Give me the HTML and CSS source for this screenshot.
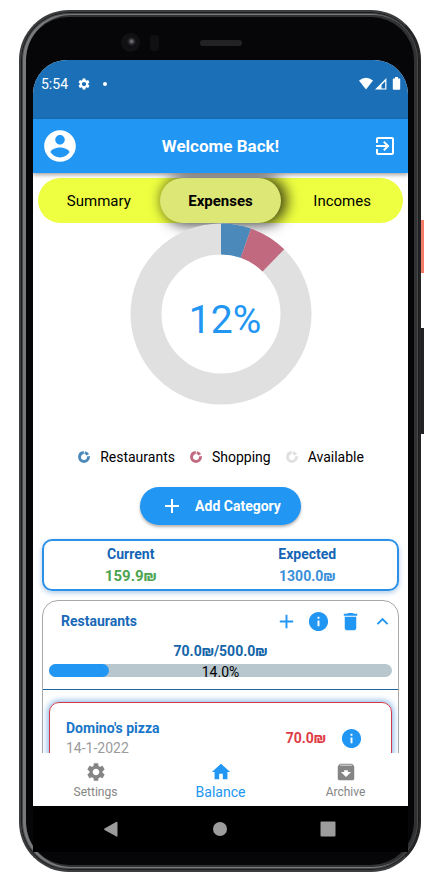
FILE: index.html
```html
<!DOCTYPE html>
<html lang="en">
<head>
<meta charset="utf-8">
<meta name="viewport" content="width=device-width, initial-scale=1">
<title>Balance</title>
<link rel="stylesheet" href="styles.css">
</head>
<body>
<svg class="defs" aria-hidden="true">
  <symbol id="gear" viewBox="0 0 24 24"><path d="M19.14 12.94c.04-.3.06-.61.06-.94 0-.32-.02-.64-.07-.94l2.03-1.58c.18-.14.23-.41.12-.61l-1.92-3.32c-.12-.22-.37-.29-.59-.22l-2.39.96c-.5-.38-1.03-.7-1.62-.94l-.36-2.54c-.04-.24-.24-.41-.48-.41h-3.84c-.24 0-.43.17-.47.41l-.36 2.54c-.59.24-1.13.57-1.62.94l-2.39-.96c-.22-.08-.47 0-.59.22L2.74 8.87c-.12.21-.08.47.12.61l2.03 1.58c-.05.3-.09.63-.09.94s.02.64.07.94l-2.03 1.58c-.18.14-.23.41-.12.61l1.92 3.32c.12.22.37.29.59.22l2.39-.96c.5.38 1.03.7 1.62.94l.36 2.54c.05.24.24.41.48.41h3.84c.24 0 .44-.17.47-.41l.36-2.54c.59-.24 1.13-.56 1.62-.94l2.39.96c.22.08.47 0 .59-.22l1.92-3.32c.12-.22.07-.47-.12-.61l-2.01-1.58zM12 15.6c-1.98 0-3.6-1.62-3.6-3.6s1.62-3.6 3.6-3.6 3.6 1.62 3.6 3.6-1.62 3.6-3.6 3.6z"/></symbol>
  <symbol id="plus" viewBox="0 0 24 24"><path d="M19 13h-6v6h-2v-6H5v-2h6V5h2v6h6v2z"/></symbol>
  <symbol id="info" viewBox="0 0 24 24"><path d="M12 2C6.48 2 2 6.48 2 12s4.48 10 10 10 10-4.48 10-10S17.52 2 12 2zm1 15h-2v-6h2v6zm0-8h-2V7h2v2z"/></symbol>
  <symbol id="usage" viewBox="0 0 24 24"><circle cx="12" cy="12" r="7.700" fill="none" stroke="currentColor" stroke-width="5" pathLength="360" stroke-dasharray="48 20 272 20" transform="rotate(-80 12 12)"/></symbol>
</svg>
<div class="phone">
  <div class="bezel" aria-hidden="true"><span class="camera"></span><span class="sensor"></span><span class="speaker"></span></div>
  <span class="side-key power" aria-hidden="true"></span>
  <span class="side-key volume" aria-hidden="true"></span>
  <div class="screen">
    <div class="status">
      <span class="clock">5:54</span>
      <svg class="icon-status"><use href="#gear"/></svg>
      <span class="dot"></span>
      <svg class="signals" viewBox="0 0 42 14" aria-hidden="true">
        <path d="M0 3.6Q7-2 14 3.6L7 12.4z"/>
        <path fill-rule="evenodd" d="M16 12.6L27.4 1v11.6zM22.5 11.4h3.7V4.2l-3.7 3.8z"/>
        <path d="M36 1.4V0h3v1.4h1.4q.8 0 .8.8v9.8q0 .8-.8.8h-5.8q-.8 0-.8-.8V2.2q0-.8.8-.8z"/>
      </svg>
    </div>
    <header class="appbar">
      <button class="bar-button" aria-label="Account"><svg class="icon-account" viewBox="0 0 24 24"><path d="M12 2C6.48 2 2 6.48 2 12s4.48 10 10 10 10-4.48 10-10S17.52 2 12 2zm0 3c1.66 0 3 1.34 3 3s-1.34 3-3 3-3-1.34-3-3 1.34-3 3-3zm0 14.2c-2.5 0-4.71-1.28-6-3.22.03-1.99 4-3.08 6-3.08 1.99 0 5.97 1.09 6 3.08-1.29 1.94-3.5 3.22-6 3.22z"/></svg></button>
      <h1>Welcome Back!</h1>
      <button class="bar-button" aria-label="Log out"><svg class="icon" viewBox="0 0 24 24"><path d="M10.09 15.59L11.5 17l5-5-5-5-1.41 1.41L12.67 11H3v2h9.67l-2.58 2.59zM19 3H5c-1.11 0-2 .9-2 2v4h2V5h14v14H5v-4H3v4c0 1.1.89 2 2 2h14c1.1 0 2-.9 2-2V5c0-1.100-.9-2-2-2z"/></svg></button>
    </header>
    <main class="content">
      <nav class="tabs">
        <button>Summary</button>
        <button class="selected">Expenses</button>
        <button>Incomes</button>
      </nav>
      <svg class="donut" viewBox="0 0 182 182" role="img" aria-label="12% used">
        <circle class="ring available" cx="91" cy="91" r="75" pathLength="1300"/>
        <g transform="rotate(-90 91 91)">
          <circle class="ring restaurants" cx="91" cy="91" r="75" pathLength="1300" stroke-dasharray="70 1230"/>
          <circle class="ring shopping" cx="91" cy="91" r="75" pathLength="1300" stroke-dasharray="90 1210" stroke-dashoffset="-70"/>
        </g>
        <text x="95" y="110" text-anchor="middle">12%</text>
      </svg>
      <ul class="legend">
        <li><svg class="restaurants"><use href="#usage"/></svg>Restaurants</li>
        <li><svg class="shopping"><use href="#usage"/></svg>Shopping</li>
        <li><svg class="available"><use href="#usage"/></svg>Available</li>
      </ul>
      <button class="add"><svg class="icon"><use href="#plus"/></svg>Add Category</button>
      <dl class="totals">
        <div><dt>Current</dt><dd class="current">159.9₪</dd></div>
        <div><dt>Expected</dt><dd>1300.0₪</dd></div>
      </dl>
      <section class="category">
        <div class="category-head">
          <h2>Restaurants</h2>
          <button aria-label="Add expense"><svg class="icon"><use href="#plus"/></svg></button>
          <button aria-label="Category details"><svg class="icon"><use href="#info"/></svg></button>
          <button aria-label="Delete category"><svg class="icon" viewBox="0 0 24 24"><path d="M6 19c0 1.100.9 2 2 2h8c1.100 0 2-.9 2-2V7H6v12zM19 4h-3.500l-1-1h-5l-1 1H5v2h14V4z"/></svg></button>
          <button aria-label="Collapse"><svg class="icon" viewBox="0 0 24 24"><path d="M12 8l-6 6 1.410 1.410L12 10.830l4.590 4.580L18 14z"/></svg></button>
        </div>
        <p class="spent">70.0₪/500.0₪</p>
        <div class="meter"><span class="fill"></span><span class="meter-text">14.0%</span></div>
        <div class="expenses">
          <article class="expense">
            <div class="expense-text"><h3>Domino's pizza</h3><time datetime="2022-01-14">14-1-2022</time></div>
            <span class="amount">70.0₪</span>
            <button aria-label="Expense details"><svg class="icon"><use href="#info"/></svg></button>
          </article>
        </div>
      </section>
    </main>
    <nav class="bottom">
      <a href="#settings"><svg class="icon"><use href="#gear"/></svg>Settings</a>
      <a href="#balance" class="active"><svg class="icon" viewBox="0 0 24 24"><path d="M10 20v-6h4v6h5v-8h3L12 3 2 12h3v8z"/></svg>Balance</a>
      <a href="#archive"><svg class="icon" viewBox="0 0 24 24"><path d="M20.540 5.230l-1.390-1.680C18.880 3.210 18.470 3 18 3H6c-.47 0-.88.21-1.160.55L3.460 5.230C3.170 5.570 3 6.020 3 6.500V19c0 1.100.9 2 2 2h14c1.100 0 2-.9 2-2V6.500c0-.48-.17-.93-.46-1.270zM12 17.500L6.500 12H10v-2h4v2h3.500L12 17.500zM5.120 5l.81-1h12l.94 1H5.120z"/></svg>Archive</a>
    </nav>
    <div class="system">
      <button aria-label="Back"><svg viewBox="0 0 16 16"><path d="M13.500.8q1 0 1 1v13q0 1-1 .8L1.500 8.900q-.9-.7 0-1.400z"/></svg></button>
      <button aria-label="Home"><svg viewBox="0 0 16 16"><circle cx="8" cy="8" r="7"/></svg></button>
      <button aria-label="Recent apps"><svg viewBox="0 0 16 16"><rect x=".5" y=".5" width="15" height="15" rx="1"/></svg></button>
    </div>
  </div>
</div>
</body>
</html>
```

FILE: styles.css
```css
* { box-sizing: border-box; }

body {
  margin: 0;
  background: #fff;
  color: #000;
  font-family: Roboto, "Open Sans", sans-serif;
  font-size: 14px;
}

h1, h2, h3, p, ul, dl, dd { margin: 0; padding: 0; }
ul { list-style: none; }
button { margin: 0; padding: 0; border: 0; background: none; color: inherit; font: inherit; }
a { color: inherit; text-decoration: none; }
svg { display: block; fill: currentColor; }
.defs { position: absolute; width: 0; height: 0; }
.icon { width: 24px; height: 24px; }

.phone {
  position: relative;
  display: flex;
  flex-direction: column;
  height: calc(100vh - 20px);
  min-height: 640px;
  margin: 10px 7px 10px 19px;
  padding: 0 11px 18px 12px;
  border: 2px solid #3c3d3e;
  border-right-color: #242425;
  border-radius: 50px;
  background: #060608;
  box-shadow: inset 0 0 0 1px #1c1c1e, inset 0 0 0 2px #48494a, inset 2px 0 0 3px #77797a, inset 0 0 0 5px #303132;
}

.bezel { position: relative; flex: none; height: 48px; }
.camera, .sensor, .speaker { position: absolute; }
.camera {
  top: 21px;
  left: 88px;
  width: 19px;
  height: 19px;
  border: 4px solid #111113;
  border-radius: 50%;
  background: radial-gradient(circle at 60% 40%, #68686d 0 1px, #25252a 3px, #101014 5px);
}
.sensor { top: 23px; left: 117px; width: 9px; height: 16px; border-radius: 3px; background: #101012; }
.speaker { top: 28px; left: 50%; width: 42px; height: 6px; margin-left: -21px; border-radius: 3px; background: #222224; }

.side-key { position: absolute; width: 3px; }
.power { top: 208px; right: -5px; height: 53px; background: #f47c68; }
.volume { top: 316px; right: -5px; height: 106px; background: #222224; }

.screen {
  display: flex;
  flex: 1;
  flex-direction: column;
  min-height: 0;
  overflow: hidden;
  border-radius: 34px 34px 0 0;
  background: #fff;
}

.status {
  display: flex;
  flex: none;
  align-items: center;
  height: 59px;
  padding: 0 7px 12px 8px;
  background: #1a6fb7;
  color: #fff;
}
.clock { font-size: 14px; }
.icon-status { width: 14px; height: 14px; margin: 0 12px 0 9px; }
.dot { width: 4px; height: 4px; border-radius: 50%; background: #fff; }
.signals { width: 42px; height: 14px; margin-left: auto; }

.appbar {
  position: relative;
  z-index: 1;
  display: grid;
  flex: none;
  grid-template-columns: 1fr auto 1fr;
  align-items: center;
  height: 54px;
  padding: 0 8px;
  background: #2196f3;
  box-shadow: 0 2px 4px rgb(0 0 0 / 35%);
  color: #fff;
}
.appbar h1 { font-size: 17px; font-weight: 700; }
.bar-button { display: flex; align-items: center; justify-content: center; width: 38px; height: 38px; }
.bar-button:last-child { justify-self: end; width: 30px; }
.icon-account { flex: none; width: 38px; height: 38px; }

.content {
  display: flex;
  flex: 1;
  flex-direction: column;
  min-height: 0;
  padding: 5px 9px 0;
  overflow: hidden;
}
.content > * { flex: none; }

.tabs {
  display: grid;
  grid-template-columns: repeat(3, 1fr);
  height: 45px;
  margin: 0 -4px;
  border-radius: 23px;
  background: #eeff41;
  font-size: 15px;
}
.tabs button { border-radius: 23px; }
.tabs .selected { background: #dce775; box-shadow: 4px 0 14px 2px rgb(0 0 0 / 75%); font-weight: 700; }

.donut { align-self: center; width: 182px; height: 182px; }
.donut text { fill: #2196f3; font-size: 39px; font-weight: 400; }
.ring { fill: none; stroke: currentColor; stroke-width: 31px; }
.restaurants { color: #4b89ba; }
.shopping { color: #c1697f; }
.available { color: #e0e0e0; }

.legend { display: flex; justify-content: center; gap: 14px; margin-top: 43px; line-height: 18px; }
.legend li { display: flex; align-items: center; gap: 9px; }
.legend svg { width: 14px; height: 14px; }

.add {
  display: flex;
  align-self: center;
  align-items: center;
  gap: 11px;
  height: 38px;
  margin-top: 21px;
  padding: 0 20px;
  border-radius: 19px;
  background: #2196f3;
  box-shadow: 0 2px 3px rgb(0 0 0 / 30%);
  color: #fff;
  font-weight: 700;
}

.totals {
  display: grid;
  grid-template-columns: 1fr 1fr;
  margin-top: 14px;
  padding: 2px 0;
  border: 2px solid #2b90e8;
  border-radius: 10px;
  box-shadow: 0 2px 5px rgb(33 110 190 / 35%);
  color: #1565b5;
  font-weight: 700;
  line-height: 22px;
  text-align: center;
}
.totals div { padding-right: 3px; }
.totals dd { color: #3b8fd9; }
.totals .current { color: #4ca450; font-size: 15px; }

.category { min-height: 200px; margin-top: 9px; border: 1px solid #a8a8a8; border-radius: 16px; }
.category-head { display: flex; align-items: center; height: 40px; padding-left: 18px; color: #2196f3; }
.category-head h2 { flex: 1; color: #1869b8; font-size: 14px; }
.category-head button { display: flex; justify-content: center; width: 32px; }
.category-head .icon { width: 23px; height: 23px; }
.spent { color: #1565a9; font-weight: 700; line-height: 20px; text-align: center; }

.meter {
  position: relative;
  height: 13px;
  margin: 3px 6px 12px;
  border-radius: 7px;
  background: #b7c7cd;
  line-height: 17px;
  text-align: center;
}
.fill { position: absolute; top: 0; bottom: 0; left: 0; width: 60px; border-radius: 7px; background: #2196f3; }
.meter-text { position: relative; }

.expenses { padding: 12px 6px; border-top: 1px solid #1e659e; }
.expense {
  display: flex;
  align-items: center;
  height: 72px;
  padding: 0 28px 0 16px;
  border: 1px solid #d33a48;
  border-radius: 10px;
  box-shadow: 0 0 6px 1px rgb(33 120 210 / 60%);
}
.expense-text { flex: 1; line-height: 20px; }
.expense h3 { color: #1976c8; font-size: 14px; }
.expense time { color: #9b9b9b; }
.amount { margin-right: 14px; color: #e03b45; font-weight: 700; }
.expense button { color: #2196f3; }
.expense .icon { width: 23px; height: 23px; }

.bottom {
  position: relative;
  display: grid;
  flex: none;
  grid-template-columns: repeat(3, 1fr);
  height: 53px;
  background: #fff;
  color: #858585;
  font-size: 12px;
}
.bottom a { display: flex; flex-direction: column; align-items: center; padding-top: 8px; line-height: 18px; }
.bottom .icon { width: 22px; height: 22px; }
.bottom .active { color: #2196f3; font-size: 14px; }

.system {
  display: flex;
  flex: none;
  align-items: center;
  justify-content: space-between;
  height: 46px;
  padding: 0 72px 0 70px;
  background: #000;
  color: #9c9c9c;
}
.system svg { width: 16px; height: 16px; }
```
